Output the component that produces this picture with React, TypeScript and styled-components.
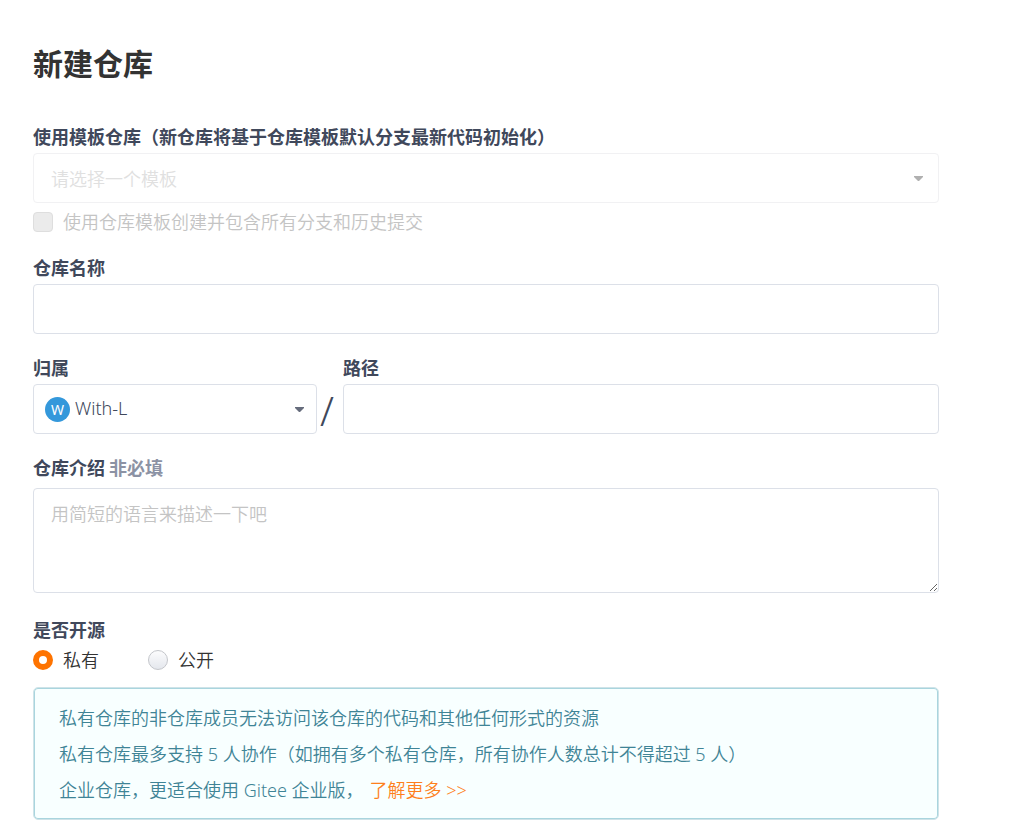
import React from 'react';
import styled, { createGlobalStyle } from 'styled-components';

const GlobalStyle = createGlobalStyle`
  *, *::before, *::after { box-sizing: border-box; }
  body {
    margin: 0;
    background: #fff;
    color: #40485b;
    font-family: 'Noto Sans', 'Noto Sans CJK SC', sans-serif;
    font-size: 18px;
    font-weight: 350;
    line-height: 26px;
  }
`;

const Page = styled.main`
  padding: 40px 91px 9px 33px;
`;

const Title = styled.h1`
  margin: 0 0 36px;
  color: #333;
  font-size: 30px;
  font-weight: 700;
  line-height: 48px;
`;

const Form = styled.form`
  display: flex;
  flex-direction: column;
  gap: 21px;
`;

const Field = styled.div`
  display: flex;
  flex-direction: column;
  min-width: 0;
`;

const Label = styled.label<{ $gap?: number }>`
  margin-bottom: ${({ $gap = 3 }) => $gap}px;
  font-weight: 700;
`;

const Optional = styled.span`
  margin-left: 4px;
  color: #8c92a4;
`;

const boxStyle = `
  width: 100%;
  margin: 0;
  border: 1px solid #dce0e8;
  border-radius: 4px;
  background: #fff;
  color: inherit;
  font: inherit;
  outline: none;
`;

const TextInput = styled.input`
  ${boxStyle}
  height: 50px;
  padding: 0 17px;
`;

const TextArea = styled.textarea`
  ${boxStyle}
  display: block;
  height: 105px;
  padding: 12px 17px;
  resize: vertical;
  &::placeholder { color: #c4c4c4; opacity: 1; }
`;

const SelectBox = styled.div`
  position: relative;
`;

const Select = styled.select<{ $inset: number }>`
  ${boxStyle}
  display: block;
  height: 50px;
  padding: 0 40px 2px ${({ $inset }) => $inset}px;
  appearance: none;
  &:disabled {
    border-color: #f1f1f3;
    color: #e0e0e0;
    opacity: 1;
    padding-top: 2px;
    padding-bottom: 0;
  }
`;

const Caret = styled.svg<{ $muted?: boolean }>`
  position: absolute;
  top: 23px;
  right: ${({ $muted }) => ($muted ? 16 : 13)}px;
  width: 9px;
  height: 5px;
  fill: ${({ $muted }) => ($muted ? '#b0b0b0' : '#666c7c')};
  pointer-events: none;
`;

const Avatar = styled.span`
  position: absolute;
  top: 13px;
  left: 12px;
  width: 25px;
  height: 25px;
  border-radius: 50%;
  background: #3498db;
  color: #fff;
  font-size: 14px;
  font-weight: 400;
  line-height: 25px;
  text-align: center;
  pointer-events: none;
`;

const Choice = styled.label<{ $muted?: boolean }>`
  display: flex;
  align-items: center;
  gap: 10px;
  color: ${({ $muted }) => ($muted ? '#c4c4c4' : '#333')};
`;

const TemplateChoice = styled(Choice)`
  margin: 6px 0 -1px;
`;

const Checkbox = styled.input`
  appearance: none;
  width: 20px;
  height: 20px;
  margin: 0;
  border: 1px solid #dedede;
  border-radius: 4px;
  background: #ebebeb;
`;

const PathRow = styled.div`
  display: grid;
  grid-template-columns: 284px 26px 1fr;
  align-items: end;
`;

const Slash = styled.span`
  padding-left: 3px;
  color: #40485b;
  font-size: 40px;
  line-height: 46px;
`;

const Visibility = styled.fieldset`
  min-width: 0;
  margin: 3px 0 0;
  padding: 0;
  border: 0;
`;

const Legend = styled.legend`
  margin-bottom: 4px;
  padding: 0;
  font-weight: 700;
`;

const Choices = styled.div`
  display: flex;
  gap: 49px;
`;

const Radio = styled.input`
  appearance: none;
  width: 20px;
  height: 20px;
  margin: 0;
  border: 1px solid #c4c6cb;
  border-radius: 50%;
  background: linear-gradient(#fcfcfd, #e4e7ed);
  &:checked {
    border: 6px solid #fe7300;
    background: #fff;
  }
`;

const Notice = styled.div`
  margin-top: 14px;
  padding: 12px 25px 11px;
  border: 1px solid #cfe3e8;
  border-radius: 5px;
  background: #f8ffff;
  box-shadow: inset 0 0 0 1px #a9d5de;
  color: #3f8496;
  line-height: 36px;
`;

const NoticeLine = styled.p`
  margin: 0;
`;

const MoreLink = styled.a`
  margin-left: 6px;
  color: #fe7f1c;
  text-decoration: none;
`;

function CaretIcon({ muted }: { muted?: boolean }) {
  return (
    <Caret $muted={muted} viewBox="0 0 9 5" aria-hidden="true">
      <path d="M0 0h9v1L5 5H4L0 1z" />
    </Caret>
  );
}

export default function App() {
  return (
    <>
      <GlobalStyle />
      <Page>
        <Title>新建仓库</Title>
        <Form>
          <Field>
            <Label htmlFor="template">使用模板仓库（新仓库将基于仓库模板默认分支最新代码初始化）</Label>
            <SelectBox>
              <Select id="template" $inset={17} disabled>
                <option>请选择一个模板</option>
              </Select>
              <CaretIcon muted />
            </SelectBox>
            <TemplateChoice $muted>
              <Checkbox type="checkbox" disabled />
              使用仓库模板创建并包含所有分支和历史提交
            </TemplateChoice>
          </Field>

          <Field>
            <Label htmlFor="name">仓库名称</Label>
            <TextInput id="name" type="text" />
          </Field>

          <PathRow>
            <Field>
              <Label htmlFor="owner">归属</Label>
              <SelectBox>
                <Select id="owner" $inset={41}>
                  <option>With-L</option>
                </Select>
                <Avatar aria-hidden="true">W</Avatar>
                <CaretIcon />
              </SelectBox>
            </Field>
            <Slash>/</Slash>
            <Field>
              <Label htmlFor="path">路径</Label>
              <TextInput id="path" type="text" />
            </Field>
          </PathRow>

          <Field>
            <Label htmlFor="intro" $gap={7}>
              仓库介绍<Optional>非必填</Optional>
            </Label>
            <TextArea id="intro" placeholder="用简短的语言来描述一下吧" />
          </Field>

          <Visibility>
            <Legend>是否开源</Legend>
            <Choices>
              <Choice>
                <Radio type="radio" name="visibility" value="private" defaultChecked />
                私有
              </Choice>
              <Choice>
                <Radio type="radio" name="visibility" value="public" />
                公开
              </Choice>
            </Choices>
            <Notice>
              <NoticeLine>私有仓库的非仓库成员无法访问该仓库的代码和其他任何形式的资源</NoticeLine>
              <NoticeLine>私有仓库最多支持 5 人协作（如拥有多个私有仓库，所有协作人数总计不得超过 5 人）</NoticeLine>
              <NoticeLine>
                企业仓库，更适合使用 Gitee 企业版，
                <MoreLink href="#enterprise">了解更多 &gt;&gt;</MoreLink>
              </NoticeLine>
            </Notice>
          </Visibility>
        </Form>
      </Page>
    </>
  );
}
